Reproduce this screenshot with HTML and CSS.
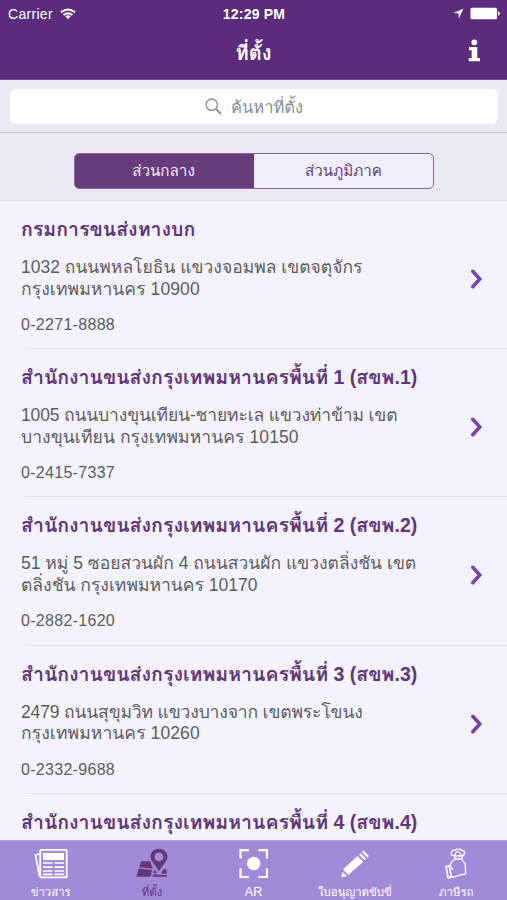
FILE: index.html
```html
<!DOCTYPE html>
<html lang="th">
<head>
<meta charset="utf-8">
<title>ที่ตั้ง</title>
<link rel="stylesheet" href="styles.css">
</head>
<body>
<div class="app">
  <header class="header">
    <div class="status">
      <div class="carrier"><span>Carrier</span>
        <svg width="16" height="12" viewBox="0 0 16 12" fill="none" stroke="#fff" stroke-width="2"><path d="M1 4.300Q8-1.300 15 4.300M3.500 7Q8 3.400 12.500 7"/><path d="M5.400 8.300Q8 6.400 10.600 8.300L8 11.300Z" fill="#fff" stroke="none"/></svg>
      </div>
      <span class="clock">12:29 PM</span>
      <div class="indicators">
        <svg width="11" height="11" viewBox="0 0 11 11" fill="#fff"><path d="M10.500.5L5.900 10.500L5.400 5.600L.5 5.100Z"/></svg>
        <svg width="30" height="13" viewBox="0 0 30 13" fill="#fff"><rect x=".5" y=".7" width="26.500" height="11.600" rx="1.500"/><path d="M28 4.200Q29.800 4.700 29.800 6.500T28 8.800Z"/></svg>
      </div>
    </div>
    <div class="nav">
      <h1 class="title">ที่ตั้ง</h1>
      <svg class="info" width="13" height="24" viewBox="0 0 13 24" fill="#fff"><circle cx="6.300" cy="3.300" r="2.900"/><path d="M1 8H9.300V19H12V22.200H.8V19H3.700V11.200H1Z"/></svg>
    </div>
  </header>
  <div class="search">
    <div class="field">
      <svg width="17" height="17" viewBox="0 0 17 17" fill="none" stroke="#8b8b90" stroke-width="1.300"><circle cx="6.700" cy="6.700" r="5.700"/><path d="M11 11L16 16" stroke-width="1.800"/></svg>
      <span class="hint">ค้นหาที่ตั้ง</span>
    </div>
  </div>
  <div class="filter">
    <div class="segments">
      <div class="segment active"><span>ส่วนกลาง</span></div>
      <div class="segment"><span>ส่วนภูมิภาค</span></div>
    </div>
  </div>
  <main class="list">
    <article class="row">
      <h2 class="name">กรมการขนส่งทางบก</h2>
      <p class="address"><span>1032 ถนนพหลโยธิน แขวงจอมพล เขตจตุจักร</span><br><span class="wide">กรุงเทพมหานคร 10900</span></p>
      <p class="phone">0-2271-8888</p>
      <svg class="chevron" width="14" height="22" viewBox="0 0 14 22"><path d="M1.800 3.300L8.800 11L1.800 18.700"/></svg>
    </article>
    <article class="row">
      <h2 class="name">สำนักงานขนส่งกรุงเทพมหานครพื้นที่ 1 (สขพ.1)</h2>
      <p class="address"><span class="tight">1005 ถนนบางขุนเทียน-ชายทะเล แขวงท่าข้าม เขต</span><br><span class="wide">บางขุนเทียน กรุงเทพมหานคร 10150</span></p>
      <p class="phone">0-2415-7337</p>
      <svg class="chevron" width="14" height="22" viewBox="0 0 14 22"><path d="M1.800 3.300L8.800 11L1.800 18.700"/></svg>
    </article>
    <article class="row">
      <h2 class="name">สำนักงานขนส่งกรุงเทพมหานครพื้นที่ 2 (สขพ.2)</h2>
      <p class="address"><span>51 หมู่ 5 ซอยสวนผัก 4 ถนนสวนผัก แขวงตลิ่งชัน เขต</span><br><span>ตลิ่งชัน กรุงเทพมหานคร 10170</span></p>
      <p class="phone">0-2882-1620</p>
      <svg class="chevron" width="14" height="22" viewBox="0 0 14 22"><path d="M1.800 3.300L8.800 11L1.800 18.700"/></svg>
    </article>
    <article class="row">
      <h2 class="name">สำนักงานขนส่งกรุงเทพมหานครพื้นที่ 3 (สขพ.3)</h2>
      <p class="address"><span class="tight">2479 ถนนสุขุมวิท แขวงบางจาก เขตพระโขนง</span><br><span class="wide">กรุงเทพมหานคร 10260</span></p>
      <p class="phone">0-2332-9688</p>
      <svg class="chevron" width="14" height="22" viewBox="0 0 14 22"><path d="M1.800 3.300L8.800 11L1.800 18.700"/></svg>
    </article>
    <article class="row">
      <h2 class="name">สำนักงานขนส่งกรุงเทพมหานครพื้นที่ 4 (สขพ.4)</h2>
    </article>
  </main>
  <nav class="tabs">
    <div class="tab">
      <svg width="34" height="32" viewBox="0 0 34 32" fill="none" stroke="#fff" stroke-width="1.800"><rect x="6.200" y="1.800" width="26.500" height="27.500" rx="1"/><path d="M5.500 6L1.500 7L5.500 28"/><path d="M9 5H30V12H9Z" fill="#fff" stroke="none"/><path d="M9 15H18.500M20.500 15H30M9 19.200H18.500M20.500 19.200H30M9 23H18.500M20.500 23H30M9 26.300H18.500M20.500 26.300H30" stroke-width="1.700"/></svg>
      <span>ข่าวสาร</span>
    </div>
    <div class="tab current">
      <svg width="34" height="32" viewBox="0 0 34 32" fill="#643777"><path d="M6.200 13.300H15.300Q16 17 18 20.800L4 19.300Z"/><path d="M3.500 20.500L17 22L15.500 28.700H1.500ZM19 22.300L20.500 22.500L22 25.300L18.500 24.900ZM28.500 21L31 20.700L32 26L26 25.500Z"/><path d="M18.200 26.200L32 27.200V28.700H17.500Z"/><path fill-rule="evenodd" d="M24 .7C19 .7 15.500 4.300 15.500 8.800C15.500 13.200 20.500 17 24 23.500C27.500 17 32.500 13.200 32.500 8.800C32.500 4.300 29 .7 24 .7ZM24 4.500A4.400 4.400 0 1 1 24 13.300A4.400 4.400 0 1 1 24 4.500Z"/></svg>
      <span>ที่ตั้ง</span>
    </div>
    <div class="tab">
      <svg width="30" height="32" viewBox="0 0 30 32" fill="none" stroke="#fff" stroke-width="2.200"><path d="M11 2.200H2.500V10.500M20.500 2.200H29V10.500M29 20.500V29H20.500M11 29H2.500V20.500"/><circle cx="15.700" cy="15.500" r="6.700" fill="#fff" stroke="none"/></svg>
      <span class="latin">AR</span>
    </div>
    <div class="tab">
      <svg width="30" height="32" viewBox="0 0 30 32" fill="#fff"><path d="M2 23.800L6.900 28L2.300 29.200Q1.500 29.300 1.700 28.400ZM3 21.500L17.500 8L23.200 13.700L8.300 27ZM19 6.600L20.600 5.200L26.100 10.800L24.600 12.300ZM22 3.900L23.500 2.600L28.800 8L27.300 9.500Z"/></svg>
      <span>ใบอนุญาตขับขี่</span>
    </div>
    <div class="tab">
      <svg width="26" height="32" viewBox="0 0 26 32" fill="none" stroke="#fff" stroke-width="1.300" stroke-linejoin="round"><path d="M12 7.500Q7.500 8 8.500 4.500Q9 1.500 12 2.300Q13.500.5 16 1.500Q18 .7 19 2.500Q22 2.500 21.500 5.500Q21 8 18 7.800M15 3.500Q11.500 4.500 12.500 8M15 3.500Q18.500 5 17.500 8"/><rect x="11.500" y="8" width="7.500" height="3" rx="1.300"/><path d="M12 11Q7.800 13.500 6.800 18.500M18.500 11Q20.500 14 22.200 16L22.700 26Q17 26.500 12.500 28.500L9 29M6.800 18.500Q10 20 9.500 22"/><path d="M3 18.700L6.200 18L8.500 29L5.200 30Z" stroke-width="1.700"/></svg>
      <span>ภาษีรถ</span>
    </div>
  </nav>
</div>
</body>
</html>
```
FILE: styles.css
```css
* { box-sizing: border-box; }
body { margin: 0; font-family: "Liberation Sans", "Loma", "Garuda", "Noto Sans Thai Looped", "Noto Sans Thai", sans-serif; }
h1, h2, p { margin: 0; }
svg { display: block; flex: none; }
.app { width: 507px; height: 900px; display: flex; flex-direction: column; overflow: hidden; background: #f4f3fd; }
.header { height: 80px; flex: none; background: #5a2c7b; border-bottom: 1px solid #75508f; color: #fff; }
.status { height: 27px; display: grid; grid-template-columns: 1fr auto 1fr; align-items: center; padding: 0 7px 0 8px; }
.carrier { display: flex; align-items: center; gap: 7px; font-size: 14px; letter-spacing: .3px; }
.clock { font-size: 14px; font-weight: bold; letter-spacing: .2px; }
.indicators { display: flex; justify-content: flex-end; align-items: center; gap: 6px; }
.nav { height: 52px; display: grid; grid-template-columns: 1fr auto 1fr; align-items: center; }
.title { grid-column: 2; font-size: 20px; line-height: 50px; white-space: nowrap; }
.info { justify-self: end; margin: 0 26px 4px 0; }
.search { height: 53px; flex: none; padding: 9px 9px 8px 10px; background: #e9e8f3; border-bottom: 1px solid #c9c8d5; }
.field { height: 35px; border-radius: 6px; background: #fff; display: flex; align-items: center; justify-content: center; gap: 9px; color: #8b8b90; font-size: 16.500px; line-height: 34px; white-space: nowrap; }
.filter { height: 68px; flex: none; padding: 20px 73px 0 74px; background: #e9e8f3; border-bottom: 1px solid #dddce7; }
.segments { height: 36px; display: grid; grid-template-columns: 1fr 1fr; border: 1.500px solid #8a659f; border-radius: 5px; overflow: hidden; background: #efeefa; color: #66407e; }
.segment { display: flex; align-items: center; justify-content: center; font-size: 15.200px; line-height: 34px; white-space: nowrap; }
.active { background: #673c7c; color: #f4effa; padding-right: 2px; }
.list { flex: 1; min-height: 0; overflow: hidden; }
.row { height: 148.200px; display: grid; grid-template: 56px 57px 1fr / 1fr 36px; padding-left: 21px; background: linear-gradient(#e5e4ee, #e5e4ee) 25px 100% / 100% 1px no-repeat; white-space: nowrap; }
.name { grid-column: 1; grid-row: 1; font-size: 19.550px; line-height: 57px; color: #613578; }
.address { grid-column: 1; grid-row: 2; font-size: 17.500px; line-height: 21.500px; color: #5c5b61; }
.wide { letter-spacing: .09px; }
.tight { letter-spacing: -.15px; }
.phone { grid-column: 1; grid-row: 3; font-size: 16px; line-height: 21px; letter-spacing: .3px; color: #5c5b61; }
.chevron { grid-column: 2; grid-row: 1 / 4; margin-top: 67px; fill: none; stroke: #7442ad; stroke-width: 3.500; stroke-linecap: round; }
.tabs { height: 60px; flex: none; display: grid; grid-template-columns: repeat(5, 1fr); background: #a18bd9; border-top: 1px solid #b7a5df; }
.tab { display: flex; flex-direction: column; align-items: center; padding-top: 7px; color: #fff; font-size: 11.400px; line-height: 24px; white-space: nowrap; }
.latin { font-size: 12.500px; }
.current { color: #643777; }
```
